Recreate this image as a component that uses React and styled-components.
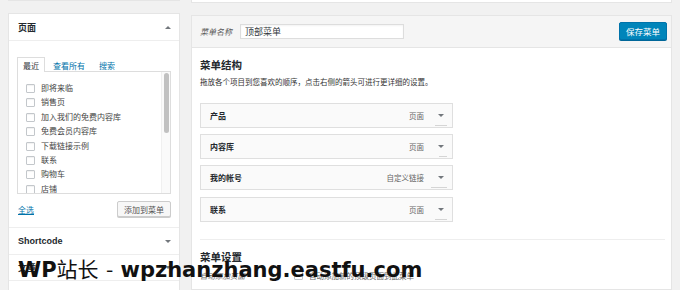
import React from "react";
import styled, { createGlobalStyle } from "styled-components";

const Global = createGlobalStyle`
  html, body { margin: 0; padding: 0; background: #f1f1f1; }
  body { font-family: "Liberation Sans", "Noto Sans CJK SC", sans-serif; color: #444; }
  * { box-sizing: border-box; }
`;

const Page = styled.div`
  position: relative;
  display: flex;
  gap: 11px;
  padding: 0 8px 0 8px;
  height: 290px;
  overflow: hidden;
`;

const LeftCol = styled.div`
  width: 172px;
  display: flex;
  flex-direction: column;
  gap: 12px;
  flex-shrink: 0;
`;

const RightCol = styled.div`
  width: 481px;
  display: flex;
  flex-direction: column;
  gap: 12px;
`;

const TopStub = styled.div`
  height: 3px;
  background: #fff;
  border: 1px solid #e5e5e5;
  border-top: none;
`;

const Accordion = styled.div`
  background: #fff;
  border: 1px solid #e5e5e5;
  display: flex;
  flex-direction: column;
`;

const SectionHead = styled.div`
  height: ${(p) => p.$h || 27}px;
  display: flex;
  align-items: center;
  justify-content: space-between;
  padding: 0 8px 0 9px;
  font-size: 9px;
  font-weight: bold;
  color: #23282d;
  border-bottom: 1px solid #eee;
  background: #fff;
`;

const Caret = styled.span`
  width: 0;
  height: 0;
  border-left: 3px solid transparent;
  border-right: 3px solid transparent;
  ${(p) => (p.$up ? "border-bottom: 3px solid #72777c;" : "border-top: 3px solid #72777c;")}
`;

const SectionBody = styled.div`
  padding: 15px 8px 10px 8px;
  border-bottom: 1px solid #eee;
`;

const Tabs = styled.div`
  display: flex;
  align-items: flex-end;
  gap: 2px;
  height: 15px;
`;

const Tab = styled.div`
  height: 15px;
  padding: 0 5px;
  display: flex;
  align-items: center;
  font-size: 8px;
  color: ${(p) => (p.$active ? "#32373c" : "#0073aa")};
  background: ${(p) => (p.$active ? "#fff" : "transparent")};
  border: 1px solid ${(p) => (p.$active ? "#ddd" : "transparent")};
  border-bottom: none;
  margin-bottom: -1px;
  position: relative;
  z-index: 1;
`;

const ListPanel = styled.div`
  border: 1px solid #ddd;
  height: 123px;
  display: flex;
  background: #fff;
  overflow: hidden;
`;

const List = styled.div`
  flex: 1;
  padding: 12px 0 0 8px;
  display: flex;
  flex-direction: column;
  gap: 5.4px;
`;

const Item = styled.label`
  display: flex;
  align-items: center;
  gap: 6px;
  font-size: 8px;
  color: #444;
  line-height: 9px;
  height: 9px;
`;

const Box = styled.span`
  width: 9px;
  height: 9px;
  border: 1px solid #c3c7cb;
  border-radius: 1px;
  background: #fff;
  box-shadow: inset 0 1px 1px rgba(0, 0, 0, 0.06);
  flex-shrink: 0;
`;

const ScrollTrack = styled.div`
  width: 9px;
  background: #fafafa;
  border-left: 1px solid #f0f0f0;
  padding: 1px 1px 0 2px;
`;

const Thumb = styled.div`
  height: 60px;
  background: #c1c1c1;
  border-radius: 3px;
`;

const Actions = styled.div`
  display: flex;
  align-items: center;
  justify-content: space-between;
  margin-top: 7px;
  padding-left: 1px;
`;

const SelectAll = styled.a`
  font-size: 8px;
  color: #0073aa;
  text-decoration: underline;
`;

const Button = styled.button`
  height: 16px;
  padding: 0 6px;
  font-family: inherit;
  font-size: 8px;
  color: #555;
  background: #f7f7f7;
  border: 1px solid #ccc;
  border-radius: 2px;
  box-shadow: 0 1px 0 #ccc;
`;

const Panel = styled.div`
  width: 481px;
  background: #fff;
  border: 1px solid #e5e5e5;
  display: flex;
  flex-direction: column;
  height: 290px;
`;

const PanelHead = styled.div`
  height: 32px;
  background: #f5f5f5;
  border-bottom: 1px solid #e5e5e5;
  display: flex;
  align-items: center;
  padding: 0 4px 0 8px;
  gap: 8px;
`;

const NameLabel = styled.span`
  font-size: 8px;
  font-style: italic;
  color: #555;
`;

const NameInput = styled.div`
  width: 164px;
  height: 15px;
  background: #fff;
  border: 1px solid #ddd;
  box-shadow: inset 0 1px 2px rgba(0, 0, 0, 0.05);
  font-size: 9px;
  color: #32373c;
  display: flex;
  align-items: center;
  padding-left: 4px;
`;

const Save = styled.button`
  margin-left: auto;
  height: 18px;
  padding: 0 6px;
  font-family: inherit;
  font-size: 8.5px;
  color: #fff;
  background: #0085ba;
  border: 1px solid #0073aa;
  border-radius: 2px;
  box-shadow: 0 1px 0 #006799;
`;

const PanelBody = styled.div`
  padding: 10px 6px 0 8px;
  display: flex;
  flex-direction: column;
`;

const H3 = styled.div`
  font-size: 10.5px;
  font-weight: bold;
  color: #23282d;
  line-height: 14px;
`;

const Desc = styled.div`
  font-size: 7.5px;
  color: #333;
  margin-top: 6px;
  line-height: 10px;
`;

const Items = styled.div`
  margin-top: 15px;
  display: flex;
  flex-direction: column;
  gap: 6.3px;
  width: 253px;
`;

const MenuItem = styled.div`
  position: relative;
  height: 25px;
  background: #fafafa;
  border: 1px solid #dfdfdf;
  display: flex;
  align-items: center;
  padding: 0 8px 0 9px;
  font-size: 8px;
`;

const ItemTitle = styled.span`
  font-weight: bold;
  color: #23282d;
  flex: 1;
`;

const ItemType = styled.span`
  color: #666;
  font-size: 7.5px;
  margin-right: 14px;
`;

const Tick = styled.span`
  position: absolute;
  right: 5px;
  bottom: 1px;
  width: ${(p) => p.$w}px;
  height: 1px;
  background: #d5d5d5;
`;

const Divider = styled.div`
  height: 1px;
  background: #eee;
  margin-top: 17px;
`;

const Settings = styled.div`
  margin-top: 10px;
`;

const SettingRow = styled.div`
  display: flex;
  align-items: center;
  margin-top: 6px;
  font-size: 7.5px;
  color: #666;
`;

const SettingLabel = styled.span`
  width: 94px;
  font-style: italic;
`;

const SettingOpt = styled.span`
  display: flex;
  align-items: center;
  gap: 6px;
`;

const Watermark = styled.div`
  position: absolute;
  left: 18px;
  top: 256px;
  font-family: "DejaVu Sans", "Noto Sans CJK SC", sans-serif;
  font-size: 21px;
  font-weight: bold;
  color: #111;
  white-space: nowrap;
  line-height: 25px;
`;

const Thin = styled.span`
  font-weight: normal;
  font-family: "Noto Sans CJK SC", sans-serif;
`;

const pages = ["即将来临", "销售页", "加入我们的免费内容库", "免费会员内容库", "下载链接示例", "联系", "购物车", "店铺"];
const menu = [
  ["产品", "页面", 12],
  ["内容库", "页面", 8],
  ["我的帐号", "自定义链接", 16],
  ["联系", "页面", 12],
];

export default function App() {
  return (
    <>
      <Global />
      <Page>
        <LeftCol>
          <TopStub />
          <Accordion>
            <SectionHead>
              页面 <Caret $up />
            </SectionHead>
            <SectionBody>
              <Tabs>
                <Tab $active>最近</Tab>
                <Tab>查看所有</Tab>
                <Tab>搜索</Tab>
              </Tabs>
              <ListPanel>
                <List>
                  {pages.map((p) => (
                    <Item key={p}>
                      <Box />
                      {p}
                    </Item>
                  ))}
                </List>
                <ScrollTrack>
                  <Thumb />
                </ScrollTrack>
              </ListPanel>
              <Actions>
                <SelectAll>全选</SelectAll>
                <Button>添加到菜单</Button>
              </Actions>
            </SectionBody>
            <SectionHead $h={27}>
              Shortcode <Caret />
            </SectionHead>
            <SectionHead $h={26}>文章 <Caret /></SectionHead>
            <SectionHead $h={26}></SectionHead>
          </Accordion>
        </LeftCol>
        <RightCol>
          <TopStub />
          <Panel>
            <PanelHead>
              <NameLabel>菜单名称</NameLabel>
              <NameInput>顶部菜单</NameInput>
              <Save>保存菜单</Save>
            </PanelHead>
            <PanelBody>
              <H3>菜单结构</H3>
              <Desc>拖放各个项目到您喜欢的顺序，点击右侧的箭头可进行更详细的设置。</Desc>
              <Items>
                {menu.map(([t, k, w]) => (
                  <MenuItem key={t}>
                    <ItemTitle>{t}</ItemTitle>
                    <ItemType>{k}</ItemType>
                    <Caret />
                    <Tick $w={w} />
                  </MenuItem>
                ))}
              </Items>
              <Divider />
              <Settings>
                <H3>菜单设置</H3>
                <SettingRow>
                  <SettingLabel>自动添加页面</SettingLabel>
                  <SettingOpt>
                    <Box />
                    自动添加新的顶级页面到此菜单
                  </SettingOpt>
                </SettingRow>
              </Settings>
            </PanelBody>
          </Panel>
        </RightCol>
        <Watermark>
          WP<Thin>站长</Thin> <Thin>-</Thin> wpzhanzhang.eastfu.com
        </Watermark>
      </Page>
    </>
  );
}
